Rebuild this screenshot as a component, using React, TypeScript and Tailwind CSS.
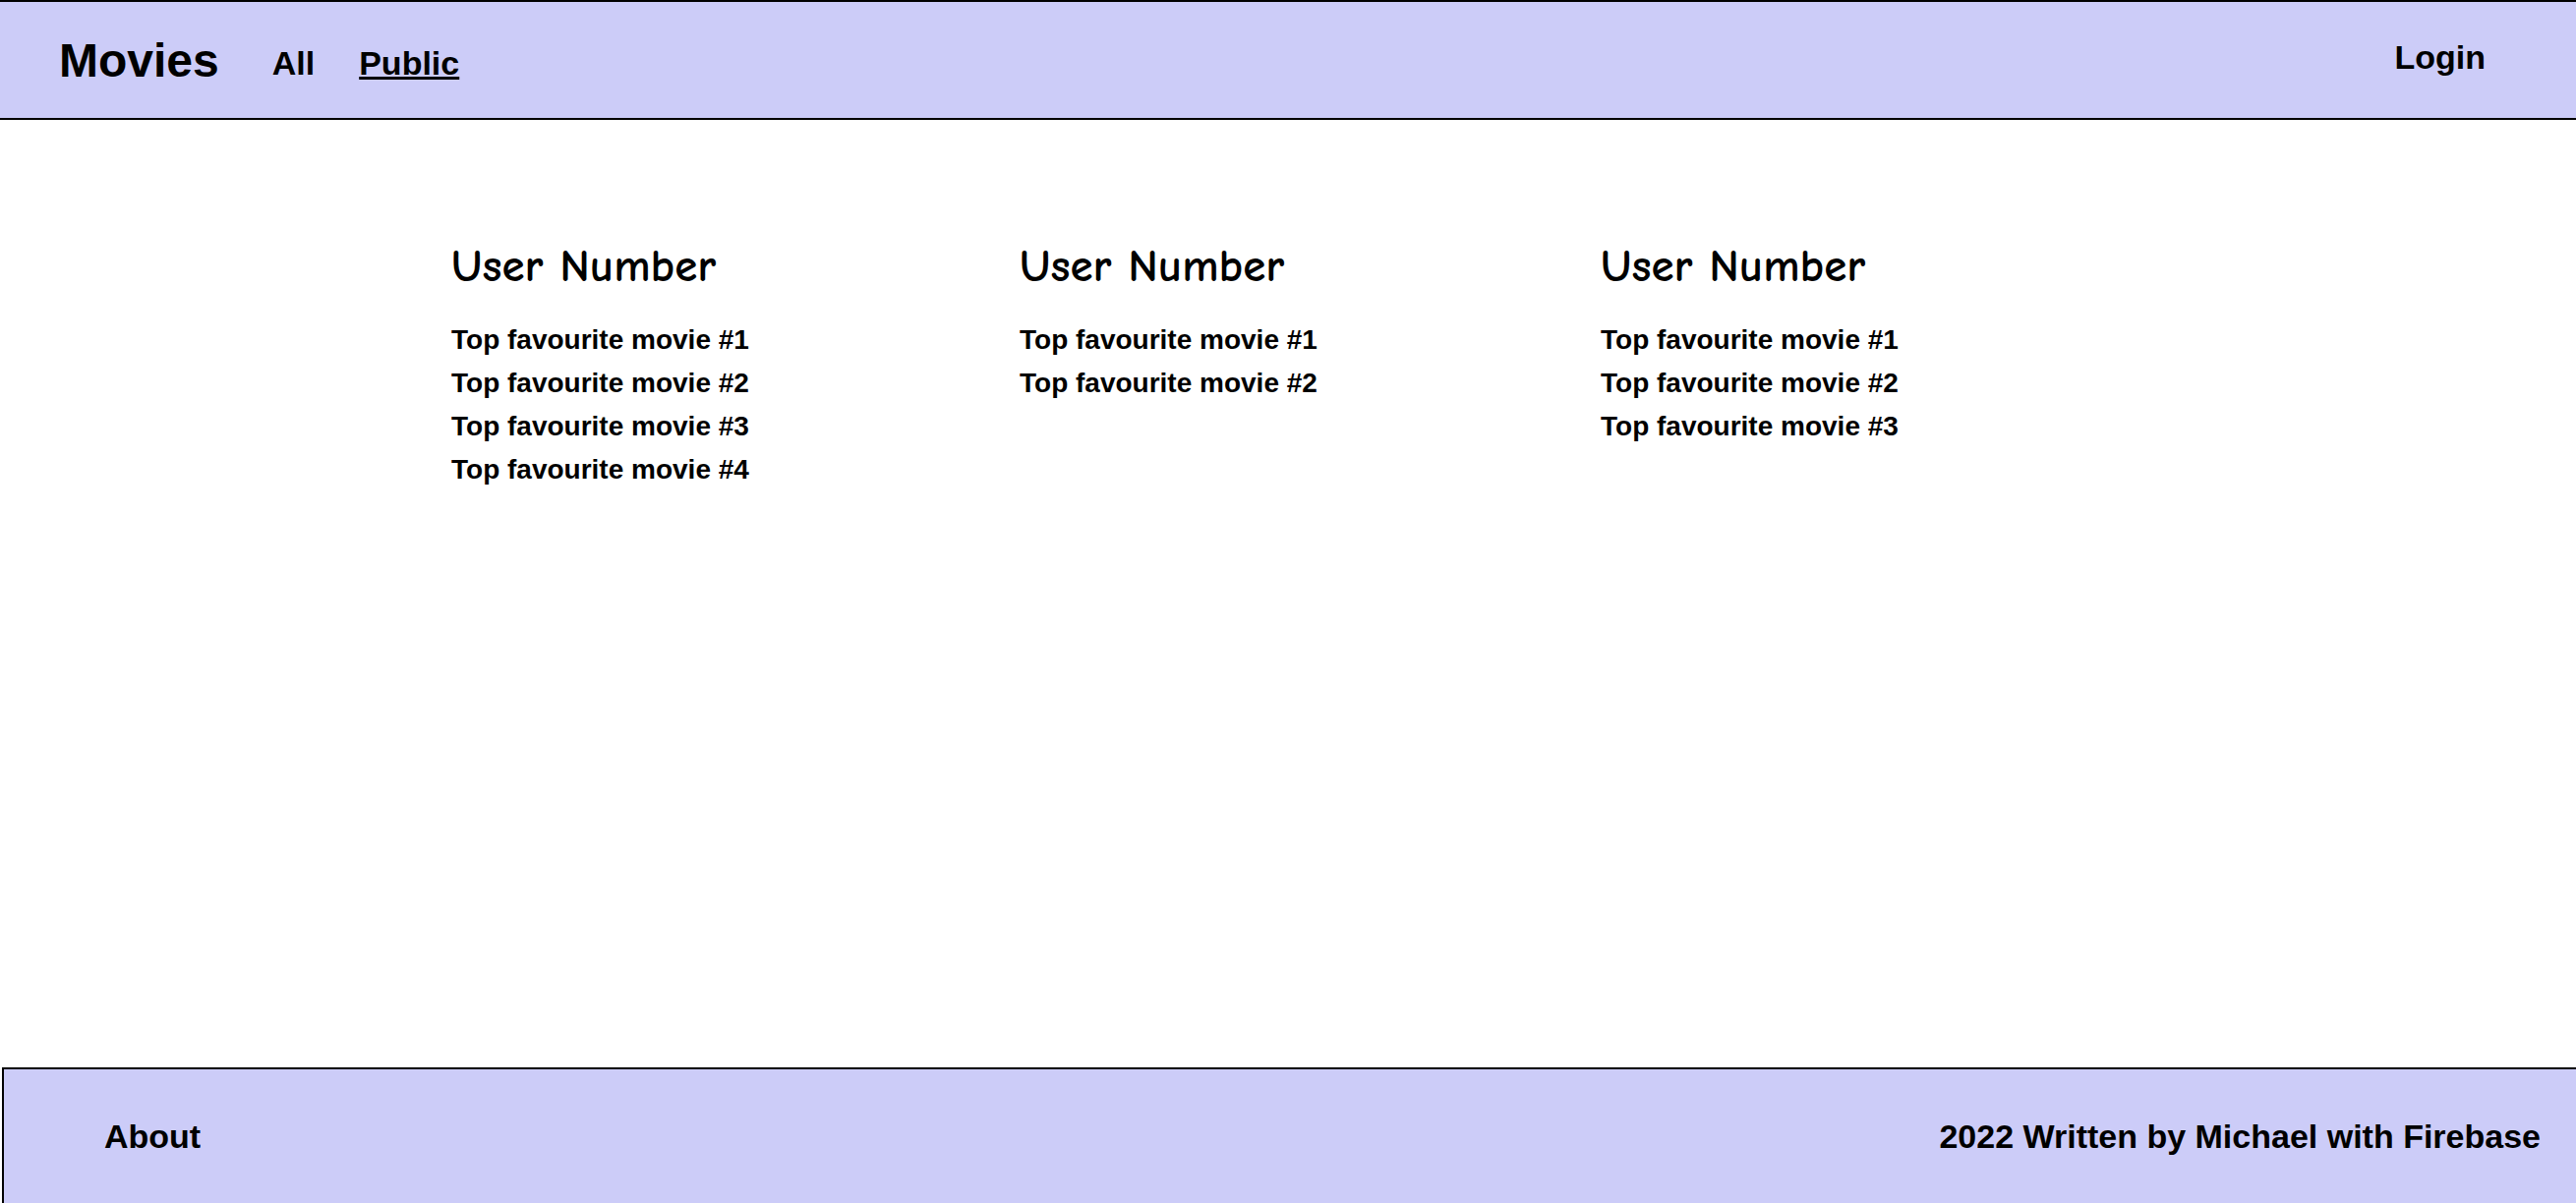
import React from 'react';

type UserList = { name: string; movies: string[] };

const USERS: UserList[] = [
  { name: 'User Number', movies: ['Top favourite movie #1', 'Top favourite movie #2', 'Top favourite movie #3', 'Top favourite movie #4'] },
  { name: 'User Number', movies: ['Top favourite movie #1', 'Top favourite movie #2'] },
  { name: 'User Number', movies: ['Top favourite movie #1', 'Top favourite movie #2', 'Top favourite movie #3'] },
];

const COL_WIDTHS = ['w-[578px]', 'w-[591px]', 'w-[500px]'];

const App: React.FC = () => {
  return (
    <div className="h-screen overflow-hidden flex flex-col bg-white text-black font-['Liberation_Sans',Arial,sans-serif]">
      {/* Header */}
      <header className="h-[122px] shrink-0 bg-[#ccccf8] border-y-2 border-black flex items-start px-[60px]">
        <h1 className="mt-[36px] text-[48px] leading-none font-bold">Movies</h1>
        <nav className="flex items-start mt-[45px] ml-[54px] gap-[45px] text-[34px] leading-none font-bold">
          <a className="cursor-pointer">All</a>
          <a className="cursor-pointer underline">Public</a>
        </nav>
        <div className="ml-auto mt-[39px] mr-[32px] text-[34px] leading-none font-bold cursor-pointer">Login</div>
      </header>

      {/* User lists */}
      <main className="h-[964px] shrink-0 flex pl-[459px] pt-[126px]">
        {USERS.map((user, i) => (
          <section key={i} className={COL_WIDTHS[i]}>
            <h2 className="text-[47px] leading-none font-bold font-['Comic_Sans_MS','Comic_Neue',cursive]">
              {user.name}
            </h2>
            <ul className="mt-[29px]">
              {user.movies.map((m) => (
                <li key={m} className="text-[28px] leading-[44px] font-bold">{m}</li>
              ))}
            </ul>
          </section>
        ))}
      </main>

      {/* Footer */}
      <footer className="ml-[2px] h-[160px] shrink-0 bg-[#ccccf8] border-t-2 border-l-2 border-black flex items-start justify-between pl-[102px] pr-[36px] pt-[51px] text-[34px] leading-none font-bold">
        <a className="cursor-pointer">About</a>
        <p>2022 Written by Michael with Firebase</p>
      </footer>
    </div>
  );
};

export default App;
